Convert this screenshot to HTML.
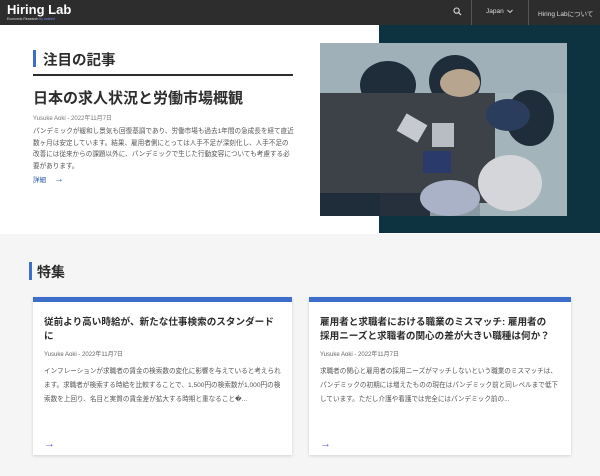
<!DOCTYPE html>
<html><head><meta charset="utf-8"><style>
*{margin:0;padding:0;box-sizing:border-box}
body{width:600px;height:476px;overflow:hidden;background:#f5f5f6;font-family:"Liberation Sans","Noto Sans CJK JP",sans-serif;position:relative;color:#2d2d2d}
.hdr{position:absolute;left:0;top:0;width:600px;height:25px;background:#2d2d2d;color:#fff}
.abs{position:absolute}
.hero{position:absolute;left:0;top:25px;width:600px;height:209px;background:#fff}
.teal{position:absolute;left:379px;top:25px;width:221px;height:208px;background:#0d3340}
.card{position:absolute;top:297px;height:158px;background:#fff;border-top:5px solid #3d6ec9;box-shadow:0 1px 3px rgba(0,0,0,.15)}
.ct{position:absolute;left:11px;top:14px;font-size:9.6px;font-weight:bold;line-height:14px;width:232px}
.cm{position:absolute;left:11px;top:47px;font-size:6px;color:#666}
.cb{position:absolute;left:11px;top:63px;font-size:6.6px;line-height:14px;color:#555;width:240px}
.ca{position:absolute;left:11px;top:136px;font-size:11px;color:#6a5acd}
</style></head><body>
<div class="hdr">
<div class="abs" style="left:7px;top:2px;font-size:13px;font-weight:bold">Hiring Lab</div>
<div class="abs" style="left:7px;top:17px;font-size:3.5px;color:#ddd">Economic Research <span style="color:#7b8cf0">by Indeed</span></div>
<svg class="abs" style="left:453px;top:7px" width="9" height="9" viewBox="0 0 9 9"><circle cx="3.6" cy="3.6" r="2.6" fill="none" stroke="#ddd" stroke-width="1.1"/><path d="M5.5 5.5L8 8" stroke="#ddd" stroke-width="1.2"/></svg>
<div class="abs" style="left:471px;top:0;width:1px;height:25px;background:#555"></div>
<div class="abs" style="left:486px;top:8px;font-size:6.5px;color:#ddd">Japan</div>
<svg class="abs" style="left:507px;top:9px" width="6" height="5"><path d="M0.5 1L3 3.5L5.5 1" fill="none" stroke="#ddd" stroke-width="0.9"/></svg>
<div class="abs" style="left:528px;top:0;width:1px;height:25px;background:#555"></div>
<div class="abs" style="left:538px;top:8px;font-size:6.5px;color:#ddd">Hiring Labについて</div>
</div>
<div class="hero"></div>
<div class="teal"></div>
<svg class="abs" style="left:320px;top:43px" width="247" height="173" viewBox="0 0 247 173">
<rect width="247" height="173" fill="#8a9aa2"/>
<rect x="0" y="0" width="247" height="50" fill="#9fb0b8"/>
<rect x="160" y="50" width="87" height="123" fill="#a4b4bb"/>
<ellipse cx="68" cy="42" rx="28" ry="24" fill="#1f2c3a"/>
<ellipse cx="135" cy="38" rx="26" ry="26" fill="#1f2c3a"/>
<ellipse cx="210" cy="75" rx="24" ry="28" fill="#1f2c3a"/>
<rect x="0" y="50" width="175" height="110" fill="#3d4249"/>
<rect x="0" y="150" width="60" height="23" fill="#1f2c3a"/>
<rect x="60" y="150" width="50" height="23" fill="#25303c"/>
<ellipse cx="140" cy="40" rx="20" ry="14" fill="#b8a590"/>
<ellipse cx="188" cy="72" rx="22" ry="16" fill="#2a3d5c"/>
<ellipse cx="190" cy="140" rx="32" ry="28" fill="#d4d6da"/>
<ellipse cx="130" cy="155" rx="30" ry="18" fill="#a9b2c6"/>
<rect x="80" y="75" width="24" height="20" fill="#c6cacf" transform="rotate(30 92 85)"/>
<rect x="112" y="80" width="22" height="24" fill="#b7bdc3"/>
<rect x="103" y="108" width="28" height="22" fill="#2a3a6a"/>
</svg>
<div class="abs" style="left:33px;top:50px;width:3px;height:17px;background:#3d6ec9"></div>
<div class="abs" style="left:43px;top:49px;font-size:14.5px;font-weight:bold">注目の記事</div>
<div class="abs" style="left:33px;top:74px;width:260px;height:2px;background:#2d2d2d"></div>
<div class="abs" style="left:33px;top:87px;font-size:15px;font-weight:bold">日本の求人状況と労働市場概観</div>
<div class="abs" style="left:33px;top:113px;font-size:6px;color:#777">Yusuke Aoki - 2022年11月7日</div>
<div class="abs" style="left:33px;top:126px;font-size:6.6px;line-height:11.5px;color:#555;width:262px">パンデミックが緩和し景気も回復基調であり、労働市場も過去1年間の急成長を経て直近数ヶ月は安定しています。結果、雇用者側にとっては人手不足が深刻化し、人手不足の改善には従来からの課題以外に、パンデミックで生じた行動変容についても考慮する必要があります。</div>
<div class="abs" style="left:33px;top:174px;font-size:6.5px;color:#2557a7">詳細 <span style="font-size:10px;margin-left:6px">→</span></div>
<div class="abs" style="left:29px;top:262px;width:3px;height:18px;background:#3d6ec9"></div>
<div class="abs" style="left:37px;top:262px;font-size:14px;font-weight:bold">特集</div>
<div class="card" style="left:33px;width:259px">
<div class="ct">従前より高い時給が、新たな仕事検索のスタンダードに</div>
<div class="cm">Yusuke Aoki - 2022年11月7日</div>
<div class="cb">インフレーションが求職者の賃金の検索数の変化に影響を与えていると考えられます。求職者が検索する時給を比較することで、1,500円の検索数が1,000円の検索数を上回り、名目と実質の賃金差が拡大する時期と重なること�...</div>
<div class="ca">→</div>
</div>
<div class="card" style="left:309px;width:262px">
<div class="ct">雇用者と求職者における職業のミスマッチ: 雇用者の採用ニーズと求職者の関心の差が大きい職種は何か？</div>
<div class="cm">Yusuke Aoki - 2022年11月7日</div>
<div class="cb">求職者の関心と雇用者の採用ニーズがマッチしないという職業のミスマッチは、パンデミックの初期には増えたものの現在はパンデミック前と同レベルまで低下しています。ただし介護や看護では完全にはパンデミック前の...</div>
<div class="ca">→</div>
</div>
</body></html>
